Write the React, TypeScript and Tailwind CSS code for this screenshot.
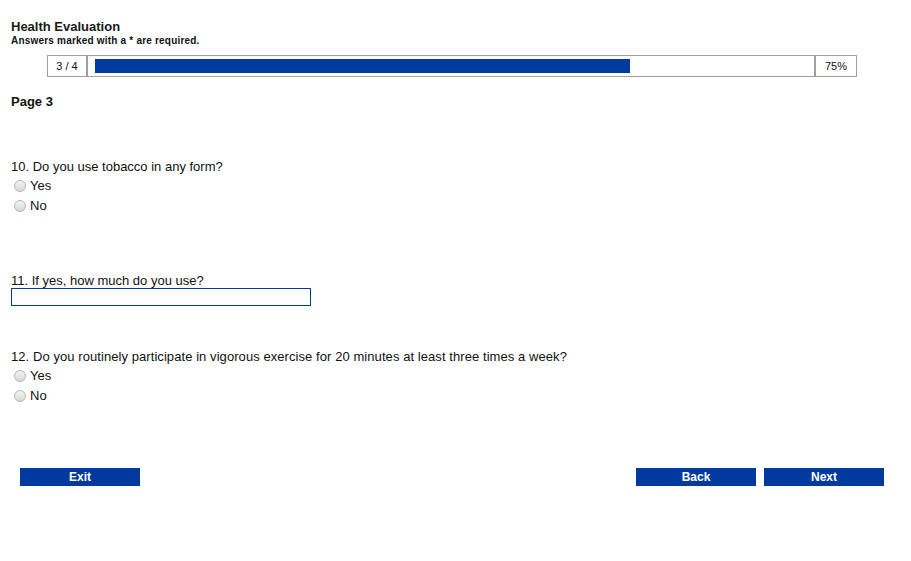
import React from "react"

const font = { fontFamily: '"Liberation Sans", Arial, sans-serif' }

function Radio({ label }: { label: string }) {
  return (
    <label className="flex items-center h-[20px] text-[13px] text-[#111]">
      <span className="ml-[3px] mr-[4px] w-[12px] h-[12px] rounded-full border border-[#b5b5b5] bg-gradient-to-b from-[#f4f4f4] to-[#d8d8d8]" />
      {label}
    </label>
  )
}

export default function App() {
  return (
    <div className="w-[911px] h-[561px] bg-white pl-[11px]" style={font}>
      <div className="pt-[19px]">
        <h1 className="text-[13px] font-bold leading-[16px] text-[#1a1a1a]">Health Evaluation</h1>
        <p className="text-[10px] tracking-[0.2px] font-bold leading-[12px] text-[#111]">
          Answers marked with a * are required.
        </p>
      </div>

      {/* Progress */}
      <div className="mt-[8px] ml-[36px] w-[810px] h-[22px] border border-[#a0a0a0] flex">
        <div className="w-[40px] flex items-center justify-center text-[11px] text-[#111] border-r-2 border-[#a0a0a0]">
          3 / 4
        </div>
        <div className="flex-1 flex items-center pl-[7px]">
          <div className="w-[535px] h-[14px] bg-[#003a9e]" />
        </div>
        <div className="w-[42px] flex items-center justify-center text-[11px] text-[#111] border-l-2 border-[#a0a0a0]">
          75%
        </div>
      </div>

      <h2 className="mt-[17px] text-[13px] font-bold leading-[16px] text-[#111]">Page 3</h2>

      <div className="mt-[49px]">
        <p className="text-[13px] leading-[16px] text-[#111]">10. Do you use tobacco in any form?</p>
        <div className="pt-[1px]">
          <Radio label="Yes" />
          <Radio label="No" />
        </div>
      </div>

      <div className="mt-[57px]">
        <p className="text-[13px] leading-[16px] text-[#111]">11. If yes, how much do you use?</p>
        <input type="text" className="block -mt-[1px] w-[300px] h-[18px] border border-[#003a9e] outline-none" />
      </div>

      <div className="mt-[43px]">
        <p className="text-[13px] tracking-[0.07px] leading-[16px] text-[#111]">
          12. Do you routinely participate in vigorous exercise for 20 minutes at least three times a week?
        </p>
        <div className="pt-[1px]">
          <Radio label="Yes" />
          <Radio label="No" />
        </div>
      </div>

      <div className="mt-[62px] flex items-center pl-[9px] pr-[27px]">
        <button className="w-[120px] h-[18px] bg-[#003a9e] text-white text-[12px] font-bold">Exit</button>
        <div className="flex-1" />
        <button className="w-[120px] h-[18px] bg-[#003a9e] text-white text-[12px] font-bold">Back</button>
        <button className="ml-[8px] w-[120px] h-[18px] bg-[#003a9e] text-white text-[12px] font-bold">Next</button>
      </div>
    </div>
  )
}
